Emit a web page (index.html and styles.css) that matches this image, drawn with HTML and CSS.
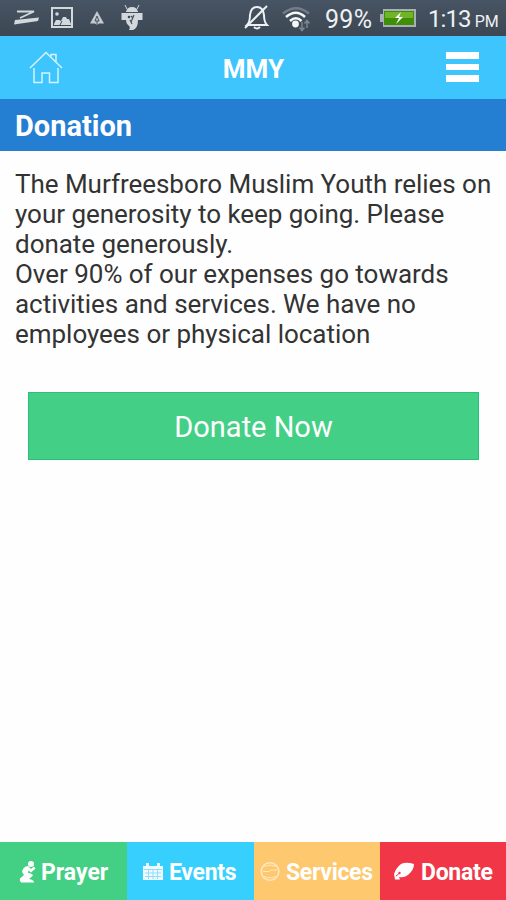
FILE: index.html
```html
<!DOCTYPE html>
<html lang="en">
<head>
    <meta charset="UTF-8">
    <meta name="viewport" content="width=device-width, initial-scale=1.0">
    <title>MMY - Donation</title>
    <link rel="stylesheet" href="styles.css">
</head>
<body>
    <div class="status-bar">
        <svg class="notifications" width="135" height="28" viewBox="0 0 135 28" fill="none" stroke="#d3d8dc">
            <path d="M3 7.500 H20 L6 14" stroke-width="1.800"/>
            <path d="M1 16 L25 13.500 L24 17 L0 20.500 Z" fill="#d3d8dc" stroke="none"/>
            <rect x="38" y="4" width="20" height="19" stroke-width="2"/>
            <circle cx="43" cy="10" r="1.800" fill="#d3d8dc" stroke="none"/>
            <path d="M40 20 L42 16 H45 L47 17 L49 13 H52 L53 15 H55 L57 20 V21 H40 Z" fill="#d3d8dc" stroke="none"/>
            <path d="M46 21 l2 -4" stroke="#3d4956" stroke-width="1"/>
            <path d="M83 7 L90 19.500 H85 L83 21 L81 19.500 H76 Z" fill="#c3c9ce" stroke="none"/>
            <path d="M83 12 l-2 5 h4 z M83 17 v4" stroke="#46515d" stroke-width="1"/>
            <path d="M112 8 q1 -5 6 -5 q5 0 6 5 z M107.500 9 h5 v7 h-5 z M123.500 9 h5 v7 h-5 z M112 9 h12 v7 q0 8 -5 10 h-4 q2 -3 -1 -5 q-2 -2 -2 -5 z" fill="#d3d8dc" stroke="none"/>
            <path d="M113 5 l-2 -4 M123 5 l2 -4" stroke-width="1"/>
            <circle cx="115" cy="13" r="1.300" fill="#3d4956" stroke="none"/>
            <path d="M120 11 l-3 7 M117 12 l2 2 M116 16 l2 4" stroke="#46515d" stroke-width="1.200"/>
        </svg>
        <svg class="bell" width="26" height="28" viewBox="0 0 26 28" fill="none" stroke="#eef1f3" stroke-width="2">
            <path d="M3 21 Q6 18 6 11 Q7 3 13 3 Q19 3 20 11 Q20 18 23 21 Z"/>
            <path d="M10 23 q3 3 6 0"/>
            <path d="M1 24 L23 2"/>
        </svg>
        <svg class="wifi" width="30" height="28" viewBox="0 0 30 28" fill="none" stroke-width="2.500">
            <path d="M1 9.500 Q14 -1 27 9.500" stroke="#737d88"/>
            <path d="M4 13 Q14 4.500 23 13" stroke="#f4f6f7"/>
            <path d="M8 17 Q14 11.500 19.500 17" stroke="#f4f6f7"/>
            <circle cx="13.500" cy="20" r="3.400" fill="#f4f6f7"/>
            <path d="M20 18 v8 M17.500 23.500 l2.500 3 2.500 -3 M25 24 v-7 M22.500 19.500 l2.500 -3 2.500 3" stroke="#7b858f" stroke-width="1.500"/>
        </svg>
        <span class="percent">99%</span>
        <svg class="battery" width="38" height="20" viewBox="0 0 38 20">
            <path d="M1 6 h3 v-5 h33 v18 h-33 v-5 h-3 z" fill="#a9afb5"/>
            <rect x="5" y="3" width="30" height="14" fill="#3e8e08"/>
            <rect x="6" y="4" width="28" height="6" fill="#70b428"/>
            <path d="M22 4 l-6 6 h4 l-3 6 7 -7 h-4 z" fill="#fff"/>
        </svg>
        <span class="clock">1:13<small>PM</small></span>
    </div>

    <header class="header">
        <svg class="home" width="34" height="34" viewBox="0 0 34 34" fill="none" stroke="#d4f3ff" stroke-width="1.500">
            <path d="M1 17 L17 1.500 L33 17 M22 5.500 V3.500 H27 V11 M5 17 V31.500 H13 V22 H20.500 V31.500 H29 V17"/>
        </svg>
        <h1 class="brand">MMY</h1>
        <div class="menu">
            <span></span>
            <span></span>
            <span></span>
        </div>
    </header>
    <h2 class="title">Donation</h2>

    <main class="content">
        <p class="text">
            The Murfreesboro Muslim Youth relies on<br>
            your generosity to keep going. Please<br>
            donate generously.<br>
            Over 90% of our expenses go towards<br>
            activities and services. We have no<br>
            employees or physical location
        </p>
        <button class="donate-btn">Donate Now</button>
    </main>

    <nav class="tabs">
        <a class="tab prayer">
            <svg width="18" height="24" viewBox="0 0 18 24" fill="#fff">
                <circle cx="12" cy="4" r="3"/>
                <path d="M9 6 Q4 6.500 3 12 L5 15 L1 18.500 Q0 20 2 22.500 H15 Q15 19.500 10 19 L14 15.500 Q13 13 9 13 L9.500 10.500 L12 12.500 L16.500 8.500 L15 6.500 L12 9 Z"/>
            </svg>
            <span>Prayer</span>
        </a>
        <a class="tab events">
            <svg width="20" height="24" viewBox="0 0 20 24">
                <path d="M0 6 h3 v-3 h3 v3 h8 v-3 h3 v3 h3 v14 h-20 z" fill="#eefaff"/>
                <path d="M1 9.500 h18 M2 13 h16 M2 16.500 h16 M5.500 10 v9 M10 10 v9 M14.500 10 v9" stroke="#8fdffb" stroke-width="1"/>
            </svg>
            <span>Events</span>
        </a>
        <a class="tab services">
            <svg width="20" height="24" viewBox="0 0 20 24" fill="none" stroke="#ffe8c1" stroke-width="1.600">
                <circle cx="10" cy="11.500" r="8.800"/>
                <path d="M4 6.500 Q10 3.500 16 6.500 M3 11.500 H9 L11 10 H17 M4 16.500 Q10 19.500 16 16.500" stroke-width="1"/>
            </svg>
            <span>Services</span>
        </a>
        <a class="tab donate">
            <svg width="22" height="24" viewBox="0 0 22 24" fill="#fff">
                <path d="M2 19.500 L1 14 Q3 8 8 4 Q13 1.500 21 4 Q21 10 15 15 Q11 18 6 17 L7 19.500 Z"/>
                <path d="M3 16 L6 13.500" stroke="#f13949" stroke-width="1"/>
                <circle cx="6.500" cy="13" r="1.200" fill="#f13949"/>
            </svg>
            <span>Donate</span>
        </a>
    </nav>
</body>
</html>
```

FILE: styles.css
```css
* {
    box-sizing: border-box;
}
body {
    margin: 0;
    height: 100vh;
    display: flex;
    flex-direction: column;
    overflow: hidden;
    font-family: Roboto, Arial, sans-serif;
    background: #fefefe;
}
.status-bar {
    display: flex;
    align-items: center;
    height: 36px;
    flex-shrink: 0;
    padding: 0 8px 0 14px;
    color: #eef1f3;
    background: linear-gradient(#475463, #3c4753);
    white-space: nowrap;
}
.notifications {
    margin-right: auto;
}
.bell {
    margin-right: 12px;
}
.wifi {
    margin-right: 13px;
}
.percent {
    width: 48px;
    padding-top: 3px;
    font-size: 25px;
    letter-spacing: 0.3px;
    margin-right: 6px;
}
.battery {
    margin-right: 11px;
}
.clock {
    width: 70px;
    padding-top: 2px;
    font-size: 24px;
    letter-spacing: -0.9px;
}
.clock small {
    font-size: 16px;
    letter-spacing: 0;
    margin-left: 4px;
}
.header {
    display: flex;
    align-items: center;
    justify-content: space-between;
    height: 63px;
    flex-shrink: 0;
    padding: 0 27px 0 29px;
    background: #3ec5fd;
}
.brand {
    margin: 2px 2px 0 0;
    font-size: 26px;
    font-weight: bold;
    color: white;
}
.menu {
    display: flex;
    flex-direction: column;
    gap: 5px;
    width: 33px;
    margin-bottom: 1px;
}
.menu span {
    height: 6.500px;
    background: white;
}
.title {
    margin: 0;
    height: 52px;
    flex-shrink: 0;
    padding: 0 15px;
    line-height: 54px;
    font-size: 29px;
    font-weight: bold;
    color: white;
    background: #247ed2;
}
.content {
    flex: 1;
    padding: 18px 15px 0;
}
.text {
    margin: 0;
    font-size: 26px;
    line-height: 30px;
    letter-spacing: -0.03px;
    color: #333;
    white-space: nowrap;
}
.donate-btn {
    display: block;
    width: 451px;
    height: 68px;
    margin: 43px 0 0 13px;
    padding: 2px 0 0;
    font-family: inherit;
    font-size: 29px;
    color: white;
    background: #43d086;
    border: 1px solid #29bf7c;
}
.tabs {
    display: grid;
    grid-template-columns: 127px 127px 126px 126px;
    height: 58px;
    flex-shrink: 0;
}
.tab {
    display: flex;
    align-items: center;
    padding-top: 2px;
    font-size: 23px;
    font-weight: bold;
    letter-spacing: -0.3px;
    color: white;
    white-space: nowrap;
}
.prayer {
    padding-left: 19px;
    gap: 4px;
    letter-spacing: 0;
    background: #43cf84;
}
.events {
    padding-left: 16px;
    gap: 6px;
    background: #37d0fe;
}
.services {
    padding-left: 6px;
    gap: 6px;
    background: #fdc86e;
}
.donate {
    padding-left: 13px;
    gap: 6px;
    background: #f13648;
}
```
